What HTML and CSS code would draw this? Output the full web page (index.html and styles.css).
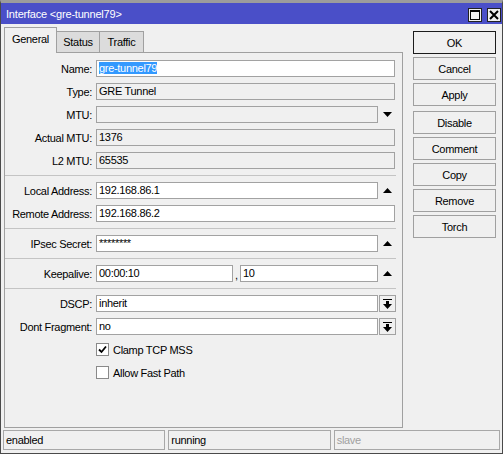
FILE: index.html
```html
<!DOCTYPE html>
<html>
<head>
    <title>Interface &lt;gre-tunnel79&gt;</title>
    <link rel="stylesheet" href="styles.css">
</head>
<body>
    <div class="window">
        <div class="titlebar">
            <span class="title">Interface &lt;gre-tunnel79&gt;</span>
            <div class="title-btns">
                <span class="tbtn">
                    <svg width="10" height="10" viewBox="0 0 10 10"><rect x="0.5" y="0.5" width="9" height="9" fill="none" stroke="#000"/><rect x="0" y="0" width="10" height="2" fill="#000"/></svg>
                </span>
                <span class="tbtn">
                    <svg width="10" height="10" viewBox="0 0 10 10"><path d="M1 1 L9 9 M9 1 L1 9" stroke="#000" stroke-width="2"/></svg>
                </span>
            </div>
        </div>

        <div class="main">
            <div class="left">
                <div class="tabs">
                    <div class="tab active">General</div>
                    <div class="tab status">Status</div>
                    <div class="tab traffic">Traffic</div>
                </div>
                <div class="panel">
                    <div class="row">
                        <span class="label">Name:</span>
                        <div class="field wide"><span class="selected">gre-tunnel79</span></div>
                    </div>
                    <div class="row">
                        <span class="label">Type:</span>
                        <div class="field wide readonly">GRE Tunnel</div>
                    </div>
                    <div class="row">
                        <span class="label">MTU:</span>
                        <div class="field readonly"></div>
                        <span class="arrow"><svg width="9" height="5" viewBox="0 0 9 5"><polygon points="0,0 9,0 4.5,5" fill="#000"/></svg></span>
                    </div>
                    <div class="row">
                        <span class="label">Actual MTU:</span>
                        <div class="field wide readonly">1376</div>
                    </div>
                    <div class="row">
                        <span class="label">L2 MTU:</span>
                        <div class="field wide readonly">65535</div>
                    </div>

                    <div class="sep"></div>

                    <div class="row">
                        <span class="label">Local Address:</span>
                        <div class="field">192.168.86.1</div>
                        <span class="arrow"><svg width="9" height="5" viewBox="0 0 9 5"><polygon points="0,5 9,5 4.5,0" fill="#000"/></svg></span>
                    </div>
                    <div class="row">
                        <span class="label">Remote Address:</span>
                        <div class="field wide">192.168.86.2</div>
                    </div>

                    <div class="sep"></div>

                    <div class="row">
                        <span class="label">IPsec Secret:</span>
                        <div class="field">********</div>
                        <span class="arrow"><svg width="9" height="5" viewBox="0 0 9 5"><polygon points="0,5 9,5 4.5,0" fill="#000"/></svg></span>
                    </div>

                    <div class="sep"></div>

                    <div class="row">
                        <span class="label">Keepalive:</span>
                        <div class="field half">00:00:10</div>
                        <span class="comma">,</span>
                        <div class="field half">10</div>
                        <span class="arrow"><svg width="9" height="5" viewBox="0 0 9 5"><polygon points="0,5 9,5 4.5,0" fill="#000"/></svg></span>
                    </div>

                    <div class="sep"></div>

                    <div class="row">
                        <span class="label">DSCP:</span>
                        <div class="field">inherit</div>
                        <span class="drop-btn"><svg width="9" height="10" viewBox="0 0 9 10"><rect x="0" y="0" width="9" height="1" fill="#000"/><rect x="3" y="2" width="3" height="3" fill="#000"/><polygon points="0,5 9,5 4.5,10" fill="#000"/></svg></span>
                    </div>
                    <div class="row">
                        <span class="label">Dont Fragment:</span>
                        <div class="field">no</div>
                        <span class="drop-btn"><svg width="9" height="10" viewBox="0 0 9 10"><rect x="0" y="0" width="9" height="1" fill="#000"/><rect x="3" y="2" width="3" height="3" fill="#000"/><polygon points="0,5 9,5 4.5,10" fill="#000"/></svg></span>
                    </div>
                    <div class="row">
                        <span class="label"></span>
                        <span class="checkbox"><svg width="9" height="9" viewBox="0 0 9 9"><path d="M1 4.5 L3.5 7 L8 1.5" fill="none" stroke="#000" stroke-width="1.8"/></svg></span>
                        <span class="check-text">Clamp TCP MSS</span>
                    </div>
                    <div class="row">
                        <span class="label"></span>
                        <span class="checkbox"></span>
                        <span class="check-text">Allow Fast Path</span>
                    </div>
                </div>
            </div>

            <div class="actions">
                <div class="btn default">OK</div>
                <div class="btn">Cancel</div>
                <div class="btn">Apply</div>
                <div class="btn group-start">Disable</div>
                <div class="btn">Comment</div>
                <div class="btn">Copy</div>
                <div class="btn">Remove</div>
                <div class="btn">Torch</div>
            </div>
        </div>

        <div class="statusbar">
            <div class="cell">enabled</div>
            <div class="cell">running</div>
            <div class="cell last muted">slave</div>
        </div>
    </div>
</body>
</html>
```

FILE: styles.css
```css
body {
    margin: 0;
    font-family: "Liberation Sans", Arial, sans-serif;
    font-size: 11px;
    letter-spacing: -0.3px;
    color: #000;
    background: #f0f0f0;
}
.window {
    width: 503px;
    height: 454px;
    box-sizing: border-box;
    border: 1px solid #4a4a4a;
    border-top: 3px solid #9c9c9c;
    background: #f0f0f0;
    display: flex;
    flex-direction: column;
}
.titlebar {
    height: 21px;
    background: #4a4fc8;
    display: flex;
    align-items: center;
    justify-content: space-between;
    padding: 0 1px 0 5px;
    flex-shrink: 0;
}
.title {
    color: #fff;
    font-size: 11px;
    letter-spacing: -0.2px;
}
.title-btns {
    display: flex;
    gap: 5px;
    padding-top: 2px;
}
.tbtn {
    width: 12px;
    height: 12px;
    border: 1px solid #222;
    background: #f0f0f0;
    display: flex;
    align-items: center;
    justify-content: center;
}
.main {
    display: flex;
    padding: 3px 0 0 3px;
    height: 404px;
    box-sizing: border-box;
    flex-shrink: 0;
}
.left {
    width: 399px;
}
.tabs {
    display: flex;
    align-items: flex-end;
    height: 25px;
}
.tab {
    width: 43px;
    height: 21px;
    box-sizing: border-box;
    border: 1px solid #a0a0a0;
    border-bottom: none;
    border-left: none;
    background: #dcdcdc;
    display: flex;
    align-items: center;
    justify-content: center;
}
.tab.traffic {
    width: 44px;
}
.tab.active {
    width: 53px;
    height: 26px;
    margin-bottom: -1px;
    border-left: 1px solid #a0a0a0;
    background: #f0f0f0;
    padding-bottom: 4px;
    position: relative;
    z-index: 1;
}
.panel {
    height: 376px;
    box-sizing: border-box;
    border: 1px solid #a0a0a0;
    padding-top: 7px;
}
.row {
    display: flex;
    align-items: center;
    height: 17px;
    margin-bottom: 6px;
}
.label {
    width: 87px;
    margin-right: 4px;
    text-align: right;
    white-space: nowrap;
}
.field {
    width: 282px;
    height: 17px;
    box-sizing: border-box;
    border: 1px solid #a2a2a2;
    background: #fff;
    padding: 0 2px;
    line-height: 15px;
    white-space: nowrap;
    overflow: hidden;
}
.field.wide {
    width: 299px;
}
.field.half {
    width: 137px;
}
.field.half + .comma + .field.half {
    width: 138px;
}
.field.readonly {
    background: #f0f0f0;
}
.selected {
    background: #3399ff;
    color: #fff;
}
.comma {
    width: 7px;
    text-align: center;
    align-self: flex-end;
    line-height: 13px;
}
.arrow {
    width: 18px;
    display: flex;
    justify-content: center;
    align-items: center;
}
.drop-btn {
    width: 17px;
    height: 17px;
    box-sizing: border-box;
    margin-left: 1px;
    border: 1px solid #a2a2a2;
    display: flex;
    justify-content: center;
    align-items: center;
}
.sep {
    height: 1px;
    background: #c4c4c4;
    margin: 1px 6px 6px 0;
}
.checkbox {
    width: 13px;
    height: 13px;
    box-sizing: border-box;
    border: 1px solid #8a8a8a;
    background: #fff;
    display: flex;
    justify-content: center;
    align-items: center;
}
.check-text {
    margin-left: 4px;
}
.actions {
    margin-left: 10px;
    padding-top: 4px;
    width: 83px;
}
.btn {
    height: 23px;
    box-sizing: border-box;
    border: 1px solid #a0a0a0;
    margin-bottom: 3px;
    display: flex;
    align-items: center;
    justify-content: center;
}
.btn.default {
    border-color: #1c1c1c;
}
.btn.group-start {
    margin-top: 5px;
}
.statusbar {
    display: flex;
    gap: 3px;
    padding: 2px 2px 0;
}
.cell {
    width: 163px;
    height: 20px;
    box-sizing: border-box;
    border: 1px solid #a8a8a8;
    padding-left: 2px;
    display: flex;
    align-items: center;
}
.cell.last {
    width: 167px;
}
.muted {
    color: #a0a0a0;
}
```
